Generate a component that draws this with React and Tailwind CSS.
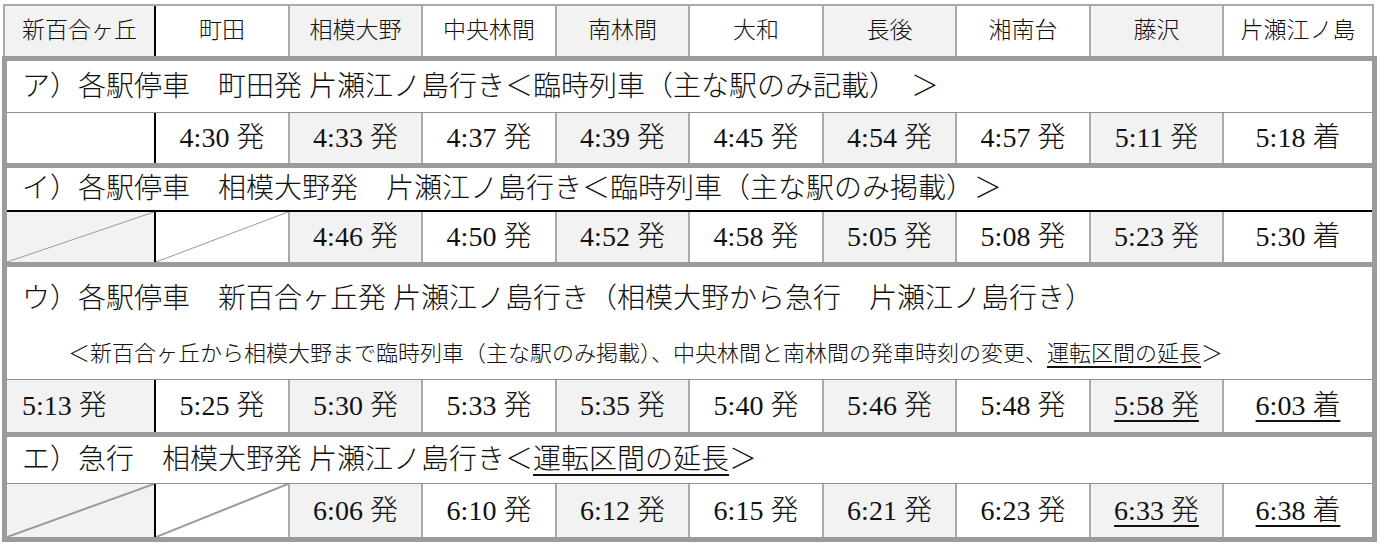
import React from "react";

const FONT = "font-['Liberation_Serif','Noto_Sans_CJK_JP',serif] font-light";
const BODY_COLS =
  "grid grid-cols-[147px_134px_133px_134px_133px_134px_133px_134px_133px_150px]";
const HEAD_COLS =
  "grid grid-cols-[149px_134px_133px_134px_133px_134px_133px_134px_133px_150px]";

const stations = [
  "新百合ヶ丘",
  "町田",
  "相模大野",
  "中央林間",
  "南林間",
  "大和",
  "長後",
  "湘南台",
  "藤沢",
  "片瀬江ノ島",
];

function cellBorder(i) {
  if (i === 0) return "";
  if (i === 1) return "border-l-2 border-l-black";
  return "border-l-2 border-l-[#aaaaaa]";
}

function cellBg(i, firstWhite) {
  if (i === 0) return firstWhite ? "bg-white" : "bg-[#f2f2f2]";
  return i % 2 === 0 ? "bg-[#f2f2f2]" : "bg-white";
}

function Diag({ thick }) {
  return (
    <svg
      className="absolute inset-0 h-full w-full"
      preserveAspectRatio="none"
      viewBox="0 0 100 100"
    >
      <line
        x1="0"
        y1="100"
        x2="100"
        y2="0"
        stroke="#9a9a9a"
        strokeWidth={thick ? 2 : 1}
        vectorEffect="non-scaling-stroke"
      />
    </svg>
  );
}

function DataRow({ cells, height, firstWhite, diag, thickDiag, underlineFrom = 99 }) {
  return (
    <div className={`${BODY_COLS} ${height}`}>
      {cells.map((c, i) => {
        const isDiag = diag && i < 2;
        const align =
          i === 0 ? "justify-start pl-[15px]" : "justify-center";
        return (
          <div
            key={i}
            className={`relative flex items-center ${align} ${cellBorder(i)} ${cellBg(
              i,
              firstWhite
            )}`}
          >
            {isDiag ? (
              <Diag thick={thickDiag} />
            ) : (
              <span
                className={
                  i >= underlineFrom
                    ? "underline decoration-[2px] underline-offset-[5px]"
                    : ""
                }
              >
                {c}
              </span>
            )}
          </div>
        );
      })}
    </div>
  );
}

const U = ({ children }) => (
  <span className="underline decoration-[2px] underline-offset-[5px]">{children}</span>
);

export default function App() {
  return (
    <div className={`${FONT} bg-white text-[#111] w-[1381px] h-[550px] pt-[4px]`}>
      {/* Header */}
      <div className="ml-[3px] w-[1371px] border-t-2 border-x-2 border-[#aaaaaa]">
        <div className={`${HEAD_COLS} h-[50px] text-[23px]`}>
          {stations.map((s, i) => (
            <div
              key={s}
              className={`flex items-center justify-center ${cellBorder(i)} ${cellBg(
                i,
                false
              )}`}
            >
              {s}
            </div>
          ))}
        </div>
      </div>

      {/* Body */}
      <div className="ml-[2px] w-[1375px] border-[5px] border-[#9b9b9b] text-[28px] leading-none">
        {/* ア */}
        <div>
          <div className="flex h-[51px] items-center bg-white pl-[15px]">
            ア）各駅停車　町田発 片瀬江ノ島行き＜臨時列車（主な駅のみ記載）　＞
          </div>
          <div className="border-t border-[#8f8f8f]">
            <DataRow
              height="h-[50px]"
              firstWhite
              cells={[
                "",
                "4:30 発",
                "4:33 発",
                "4:37 発",
                "4:39 発",
                "4:45 発",
                "4:54 発",
                "4:57 発",
                "5:11 発",
                "5:18 着",
              ]}
            />
          </div>
        </div>

        {/* イ */}
        <div className="border-t-[5px] border-[#9b9b9b]">
          <div className="flex h-[42px] items-center bg-white pl-[15px]">
            イ）各駅停車　相模大野発　片瀬江ノ島行き＜臨時列車（主な駅のみ掲載）＞
          </div>
          <div className="border-t-2 border-black">
            <DataRow
              height="h-[50px]"
              diag
              cells={[
                "",
                "",
                "4:46 発",
                "4:50 発",
                "4:52 発",
                "4:58 発",
                "5:05 発",
                "5:08 発",
                "5:23 発",
                "5:30 着",
              ]}
            />
          </div>
        </div>

        {/* ウ */}
        <div className="border-t-[5px] border-[#9b9b9b]">
          <div className="flex h-[112px] flex-col bg-white pt-[14px]">
            <div className="flex h-[36px] items-center pl-[15px]">
              ウ）各駅停車　新百合ヶ丘発 片瀬江ノ島行き（相模大野から急行　片瀬江ノ島行き）
            </div>
            <div className="mt-[19px] flex h-[36px] items-center pl-[61px] text-[22px]">
              ＜新百合ヶ丘から相模大野まで臨時列車（主な駅のみ掲載）、中央林間と南林間の発車時刻の変更、
              <U>運転区間の延長</U>＞
            </div>
          </div>
          <div className="border-t border-[#8f8f8f]">
            <DataRow
              height="h-[52px]"
              underlineFrom={8}
              cells={[
                "5:13 発",
                "5:25 発",
                "5:30 発",
                "5:33 発",
                "5:35 発",
                "5:40 発",
                "5:46 発",
                "5:48 発",
                "5:58 発",
                "6:03 着",
              ]}
            />
          </div>
        </div>

        {/* エ */}
        <div className="border-t-[5px] border-[#9b9b9b]">
          <div className="flex h-[46px] items-center bg-white pl-[15px]">
            エ）急行　相模大野発 片瀬江ノ島行き＜<U>運転区間の延長</U>＞
          </div>
          <div className="border-t border-[#8f8f8f]">
            <DataRow
              height="h-[53px]"
              diag
              thickDiag
              underlineFrom={8}
              cells={[
                "",
                "",
                "6:06 発",
                "6:10 発",
                "6:12 発",
                "6:15 発",
                "6:21 発",
                "6:23 発",
                "6:33 発",
                "6:38 着",
              ]}
            />
          </div>
        </div>
      </div>
    </div>
  );
}
